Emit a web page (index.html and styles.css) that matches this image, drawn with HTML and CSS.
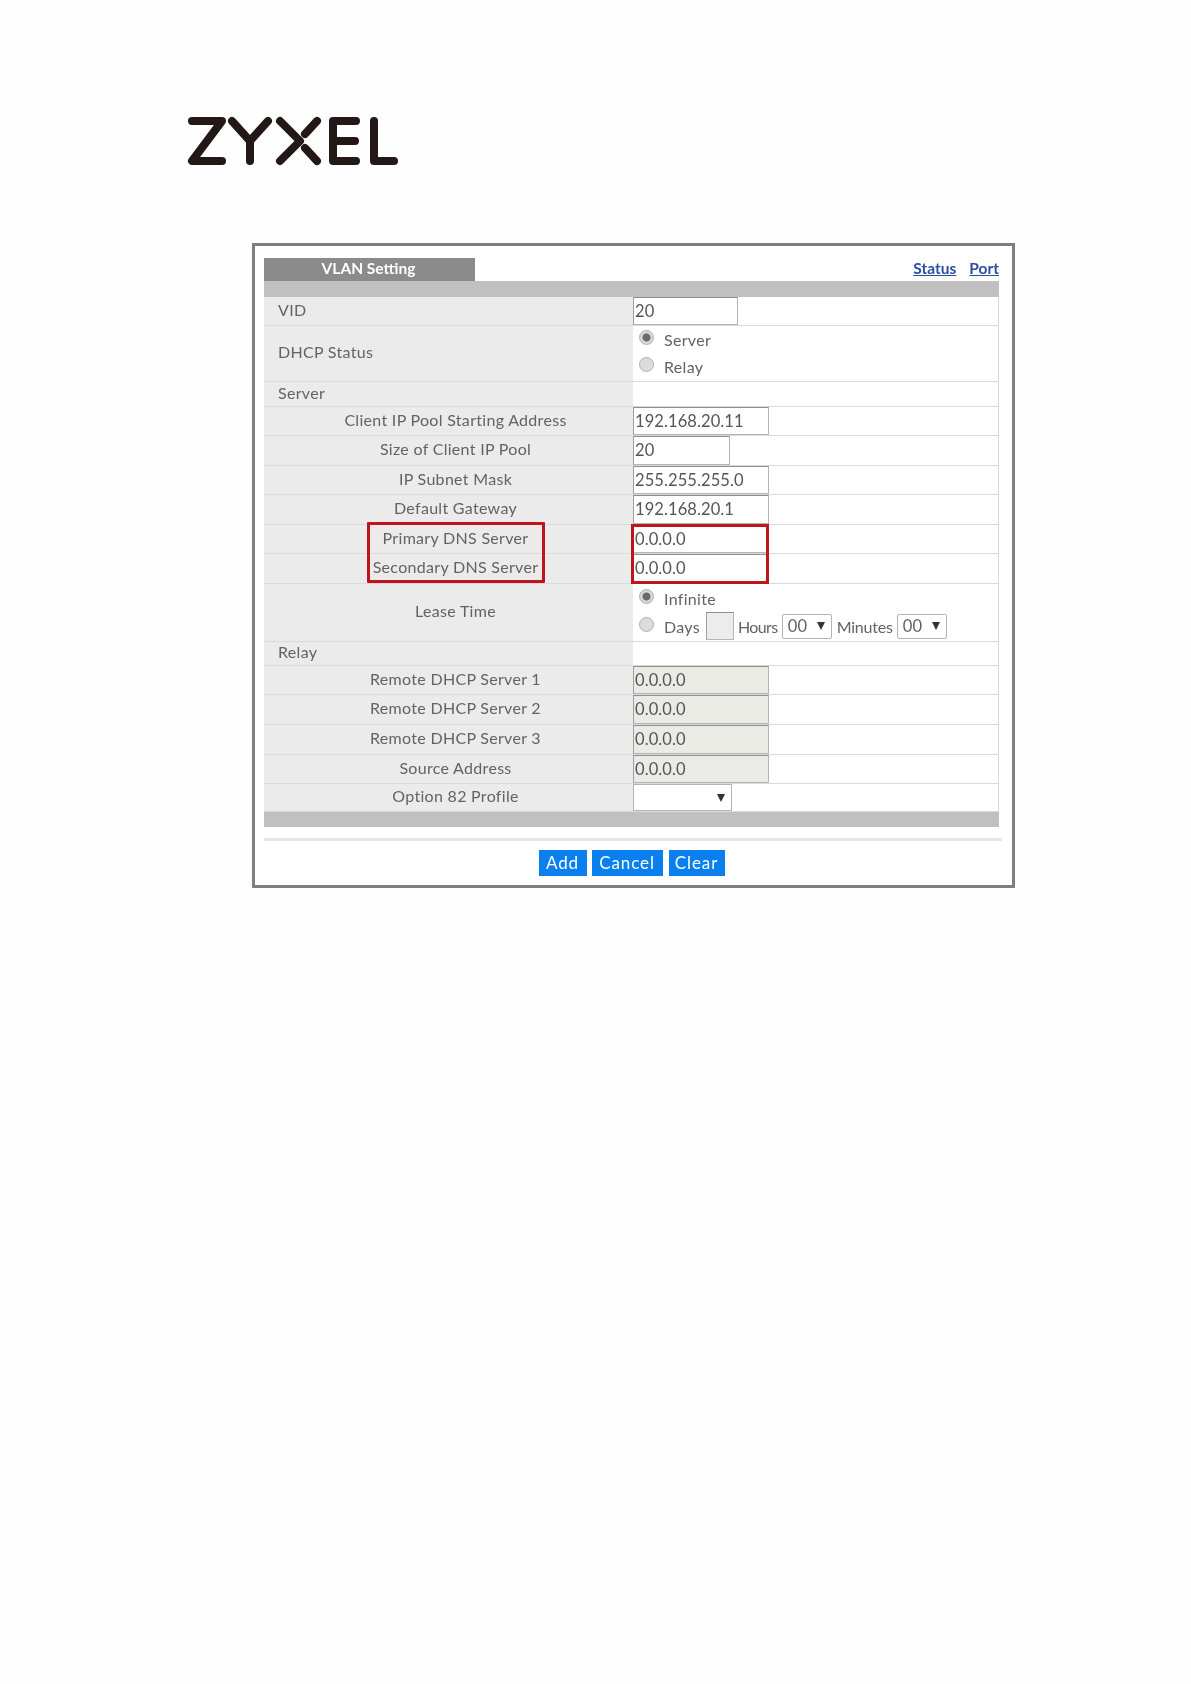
FILE: index.html
```html
<!DOCTYPE html>
<html lang="en">
<head>
<meta charset="utf-8">
<title>VLAN Setting</title>
<link rel="stylesheet" href="styles.css">
</head>
<body>
<header class="logo-wrap">
  <svg class="logo" width="220" height="60" viewBox="0 0 220 60" aria-label="ZYXEL">
    <g fill="none" stroke="#231815" stroke-width="8" stroke-linecap="round" stroke-linejoin="round">
      <path d="M10 6H40L10 46H40"/>
      <path d="M50 6L68 26L86 6M68 26V46"/>
      <path d="M98 6L118 26L98 46"/>
      <path d="M135 6L123 19M123 33L135 46"/>
      <path d="M174 6H151V46H174M151 26H173"/>
      <path d="M192 6V46H212"/>
    </g>
  </svg>
</header>

<main class="panel">
  <div class="head">
    <div class="tab">VLAN Setting</div>
    <nav class="links"><a href="#">Status</a><a href="#">Port</a></nav>
  </div>
  <div class="band band-top"></div>
  <div class="table">
    <div class="row h29"><div class="label left">VID</div><div class="val"><span class="input w105">20</span></div></div>
    <div class="row h56"><div class="label left">DHCP Status</div><div class="val stack">
      <div class="opt"><span class="radio on"></span>Server</div>
      <div class="opt"><span class="radio"></span>Relay</div>
    </div></div>
    <div class="row h25"><div class="label left">Server</div><div class="val"></div></div>
    <div class="row h29"><div class="label">Client IP Pool Starting Address</div><div class="val"><span class="input w136">192.168.20.11</span></div></div>
    <div class="row h30"><div class="label">Size of Client IP Pool</div><div class="val"><span class="input w97">20</span></div></div>
    <div class="row h29"><div class="label">IP Subnet Mask</div><div class="val"><span class="input w136">255.255.255.0</span></div></div>
    <div class="row h30"><div class="label">Default Gateway</div><div class="val"><span class="input w136">192.168.20.1</span></div></div>
    <div class="row h29"><div class="label">Primary DNS Server</div><div class="val"><span class="input w136">0.0.0.0</span></div></div>
    <div class="row h30"><div class="label">Secondary DNS Server</div><div class="val"><span class="input w136">0.0.0.0</span></div></div>
    <div class="row h58"><div class="label">Lease Time</div><div class="val stack">
      <div class="opt"><span class="radio on"></span>Infinite</div>
      <div class="opt"><span class="radio"></span><span class="word days-word">Days</span><span class="input days"></span><span class="word hours-word">Hours</span><span class="select w50">00<i class="arrow"></i></span><span class="word minutes-word">Minutes</span><span class="select w50">00<i class="arrow"></i></span></div>
    </div></div>
    <div class="row h24"><div class="label left">Relay</div><div class="val"></div></div>
    <div class="row h29"><div class="label">Remote DHCP Server 1</div><div class="val"><span class="input w136 off">0.0.0.0</span></div></div>
    <div class="row h30"><div class="label">Remote DHCP Server 2</div><div class="val"><span class="input w136 off">0.0.0.0</span></div></div>
    <div class="row h30"><div class="label">Remote DHCP Server 3</div><div class="val"><span class="input w136 off">0.0.0.0</span></div></div>
    <div class="row h29"><div class="label">Source Address</div><div class="val"><span class="input w136 off">0.0.0.0</span></div></div>
    <div class="row h28"><div class="label">Option 82 Profile</div><div class="val"><span class="select w99"><i class="arrow"></i></span></div></div>
    <div class="mark mark-left"></div>
    <div class="mark mark-right"></div>
  </div>
  <div class="band"></div>
  <div class="rule"></div>
  <div class="actions"><button class="b-add">Add</button><button class="b-cancel">Cancel</button><button class="b-clear">Clear</button></div>
</main>
</body>
</html>
```

FILE: styles.css
```css
* { box-sizing: border-box; }
html, body { margin: 0; height: 100%; }
body {
  background: #fefefe;
  font-family: "Lato", "Liberation Sans", sans-serif;
  font-size: 16px;
  color: #636363;
  padding: 115px 0 0 0;
}
.logo-wrap { padding-left: 182px; height: 128px; }
.logo { display: block; }

.panel {
  width: 763px;
  height: 645px;
  margin-left: 252px;
  border: 3px solid #7f7f7f;
  background: #fff;
  padding: 12px 13px 0 9px;
  filter: blur(0.35px);
}
.head { display: flex; justify-content: space-between; align-items: flex-end; height: 23px; }
.tab {
  width: 211px;
  height: 23px;
  background: #8b8b8b;
  color: #fff;
  font-weight: 700;
  font-size: 15.5px;
  line-height: 21px;
  text-align: center;
  padding-right: 2px;
}
.links { display: flex; gap: 13px; font-size: 15.5px; font-weight: 700; line-height: 20px; height: 23px; }
.links a { color: #2b4ea0; }
.band { height: 15px; background: #c0c0c0; }
.band-top { height: 16px; }

.table { position: relative; border-right: 1px solid #d8d8d8; }
.row { display: flex; border-bottom: 1px solid #dadada; }
.h24 { height: 24px; } .h25 { height: 25px; } .h28 { height: 28px; }
.h29 { height: 29px; } .h30 { height: 30px; } .h56 { height: 56px; } .h58 { height: 58px; }
.label {
  width: 369px;
  flex: none;
  background: #ebebeb;
  display: flex;
  align-items: center;
  justify-content: center;
  padding: 0 0 4px 14px;
  white-space: nowrap;
  letter-spacing: 0.3px;
}
.label.left { justify-content: flex-start; }
.val { flex: 1; display: flex; align-items: stretch; }
.val.stack { flex-direction: column; justify-content: space-around; padding: 0 0 1px 6px; }
.opt { display: flex; align-items: center; height: 27px; letter-spacing: 0.3px; white-space: nowrap; }
.word { flex: none; }

.input {
  display: block;
  height: 100%;
  border: 1px solid #b4b4b4;
  border-top-color: #8e8e8e;
  border-left-color: #a0a0a0;
  background: #fff;
  padding-left: 1px;
  line-height: 26px;
  font-size: 16.5px;
  letter-spacing: 0.1px;
  color: #555;
}
.w97 { width: 97px; } .w105 { width: 105px; } .w136 { width: 136px; }
.input.off { background: #ebebe6; }
.input.days { width: 28px; height: 28px; background: #ececec; margin-left: 6px; flex: none; }
.hours-word { margin-left: 4px; letter-spacing: -0.6px; }
.minutes-word { margin-left: 5px; letter-spacing: -0.2px; }

.radio {
  width: 15px;
  height: 15px;
  border-radius: 50%;
  border: 1px solid #b0b0b0;
  background: #dcdcdc;
  margin-right: 10px;
  flex: none;
  position: relative;
  top: -2px;
}
.radio.on { background: radial-gradient(circle, #6a6a6a 0 3.5px, #d8d8d8 4.5px); }

.select {
  display: flex;
  align-items: center;
  justify-content: space-between;
  height: 25px;
  border: 1px solid #b4b4b4;
  border-radius: 2px;
  background: #fff;
  padding: 0 6px 0 5px;
  margin-left: 4px;
  font-size: 16.5px;
  flex: none;
}
.w50 { width: 50px; }
.w99 { width: 99px; height: 100%; margin: 0; padding-right: 6px; justify-content: flex-end; border-radius: 0; }
.arrow {
  width: 0; height: 0;
  border-left: 4px solid transparent;
  border-right: 4px solid transparent;
  border-top: 8px solid #333;
}

.mark { position: absolute; border: 3px solid #c0141c; pointer-events: none; }
.mark-left { left: 103px; top: 225px; width: 178px; height: 61px; border-radius: 1px; }
.mark-right { left: 367px; top: 227px; width: 138px; height: 60px; }

.rule { height: 3px; background: #e6e6e6; margin: 11px -3px 0 0; }
.actions { display: flex; justify-content: center; gap: 5px; margin-top: 9px; }
button {
  height: 26px;
  border: 0;
  padding: 0 0 1px;
  background: #0a80f0;
  color: #fff;
  font-family: inherit;
  font-size: 17px;
  letter-spacing: 0.9px;
  flex: none;
}
.b-add { width: 48px; }
.b-cancel { width: 71px; }
.b-clear { width: 56px; margin-left: 1px; }
```
